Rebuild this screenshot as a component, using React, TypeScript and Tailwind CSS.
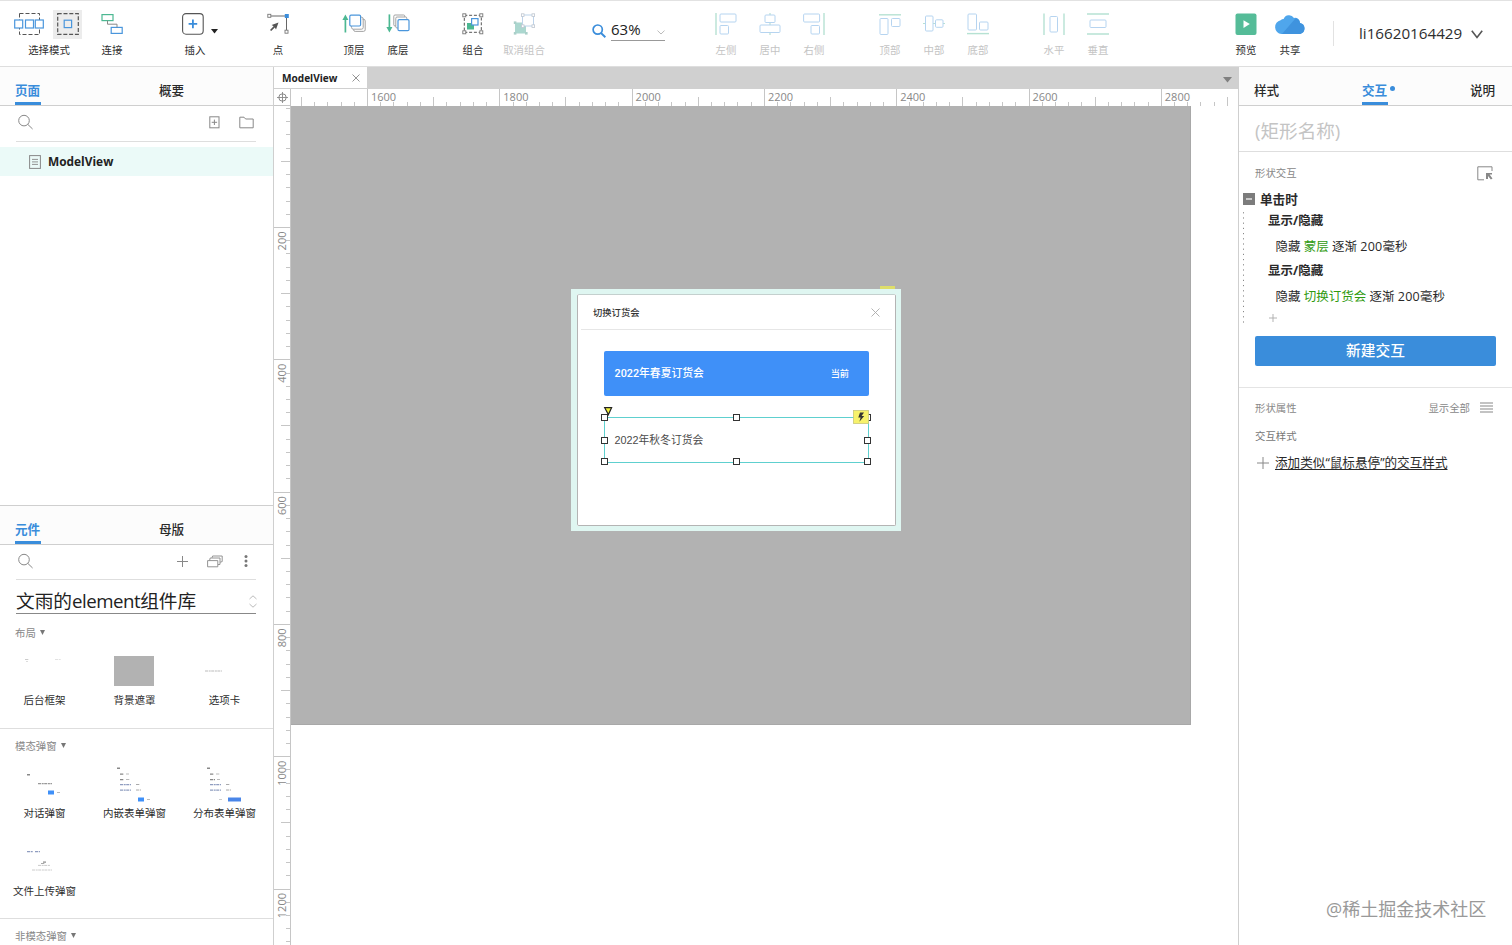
import React from "react";
import type { ReactNode } from "react";

const BLUE = "#4a96dc";
const GREEN = "#4cb892";

/* ---------- toolbar ---------- */

function Tool({ label, muted, width = "w-[44px]", children }: { label: string; muted?: boolean; width?: string; children: ReactNode }) {
  return (
    <div className={`flex shrink-0 flex-col items-center pt-[7px] ${width}`}>
      <div className={`flex h-[32px] items-center justify-center ${muted ? "opacity-40" : ""}`}>{children}</div>
      <div className={`mt-[3px] whitespace-nowrap text-[10.4px] leading-[15px] ${muted ? "text-[#c4c4c4]" : "text-[#2e2e2e]"}`}>{label}</div>
    </div>
  );
}

function Icon({ w = 22, h = 22, children }: { w?: number; h?: number; children: ReactNode }) {
  return (
    <svg width={w} height={h} viewBox={`0 0 ${w} ${h}`} fill="none" className="shrink-0">
      {children}
    </svg>
  );
}

function Toolbar() {
  return (
    <header className="flex h-[67px] shrink-0 border-t border-b border-t-[#e2e2e2] border-b-[#dedede] bg-white pl-[8px]">
      <Tool label="选择模式" width="w-[82px]">
        <div className="flex items-center gap-[9px] pr-[2px]">
          <Icon w={30} h={24}>
            <rect x="5.5" y="1.5" width="20" height="21" stroke="#555" strokeDasharray="4 2" />
            <rect x="0.7" y="8" width="8" height="8" fill="#fff" stroke={BLUE} strokeWidth="1.2" />
            <rect x="11.5" y="8" width="8" height="8" fill="#fff" stroke={BLUE} strokeWidth="1.2" />
            <rect x="21.3" y="8" width="8" height="8" fill="#fff" stroke={BLUE} strokeWidth="1.2" />
          </Icon>
          <div className="flex h-[29px] w-[29px] items-center justify-center bg-[#ececec]">
            <Icon w={22} h={22}>
              <rect x="0.7" y="0.7" width="20.6" height="20.6" stroke="#555" strokeWidth="1.2" strokeDasharray="4 1.8" />
              <rect x="7.2" y="7.2" width="7.4" height="7.4" stroke={BLUE} strokeWidth="1.2" />
            </Icon>
          </div>
        </div>
      </Tool>
      <Tool label="连接">
        <Icon>
          <rect x="1" y="1.6" width="11" height="6" stroke={GREEN} strokeWidth="1.2" />
          <rect x="10.2" y="14.4" width="11" height="6" stroke={BLUE} strokeWidth="1.2" />
          <path d="M6.5 7.6V11.2H16V14.4" stroke="#888" />
        </Icon>
      </Tool>
      <div className="w-[39px] shrink-0" />
      <Tool label="插入">
        <div className="flex items-center gap-[7px] pl-[10px]">
          <Icon>
            <rect x="0.6" y="0.6" width="20.6" height="20.6" rx="3.4" stroke="#555" strokeWidth="1.1" />
            <path d="M10.9 6.6V15.2M6.6 10.9H15.2" stroke="#3a8ddb" strokeWidth="1.8" />
          </Icon>
          <svg width="7" height="5" viewBox="0 0 7 5" className="mt-[14px]"><path d="M0 0H7L3.5 4.6Z" fill="#222" /></svg>
        </div>
      </Tool>
      <div className="w-[39px] shrink-0" />
      <Tool label="点">
        <Icon>
          <path d="M4 3H19.5V17" stroke="#666" />
          <rect x="0.8" y="1.3" width="3" height="3" fill="#fff" stroke="#777" strokeWidth="0.9" />
          <rect x="17.8" y="1" width="4" height="4" fill="#3a8ddb" />
          <rect x="18" y="17.2" width="3" height="3" fill="#fff" stroke="#777" strokeWidth="0.9" />
          <path d="M11.5 9.5L4.6 12.1L6.6 13.3L3 16.9L4.2 18.1L7.8 14.6L9 16.4Z" fill="#555" />
        </Icon>
      </Tool>
      <div className="w-[32px] shrink-0" />
      <Tool label="顶层">
        <Icon w={24} h={22}>
          <path d="M3.4 19.5V5" stroke={GREEN} strokeWidth="1.7" />
          <path d="M0.4 7L3.4 1.4L6.4 7Z" fill={GREEN} />
          <path d="M20.6 6.2H21.4Q23.2 6.2 23.2 8V16.8Q23.2 18.4 21.4 18.4H13.2Q11.6 18.4 11.6 16.8V16.4" stroke="#999" strokeWidth="0.9" />
          <path d="M18.6 4.2H19.4Q21.2 4.2 21.2 6V14.6Q21.2 16.2 19.4 16.2H11.2Q9.6 16.2 9.6 14.6V13" stroke="#999" strokeWidth="0.9" />
          <rect x="7.8" y="2.2" width="10.8" height="10.8" rx="1.2" fill="#fff" stroke={BLUE} strokeWidth="1.2" />
        </Icon>
      </Tool>
      <Tool label="底层">
        <Icon w={24} h={22}>
          <path d="M3.4 1.4V15.5" stroke={GREEN} strokeWidth="1.7" />
          <path d="M0.4 14L3.4 19.4L6.4 14Z" fill={GREEN} />
          <rect x="7.8" y="2" width="11" height="11" rx="1.2" fill="#fff" stroke="#999" strokeWidth="0.9" />
          <rect x="9.8" y="4" width="11" height="11" rx="1.2" fill="#fff" stroke="#999" strokeWidth="0.9" />
          <rect x="12" y="6.6" width="11" height="11" rx="1.2" fill="#fff" stroke={BLUE} strokeWidth="1.2" />
        </Icon>
      </Tool>
      <div className="w-[31px] shrink-0" />
      <Tool label="组合">
        <Icon>
          <rect x="2.3" y="2.3" width="17" height="17" stroke="#555" strokeDasharray="3 1.8" />
          <rect x="5" y="10" width="7" height="6.5" fill={GREEN} />
          <rect x="9.6" y="5.6" width="6.4" height="6.4" fill="#fff" stroke={BLUE} strokeWidth="1.2" />
          {[[0.8, 0.8], [17.8, 0.8], [0.8, 17.8], [17.8, 17.8]].map(([x, y]) => (
            <rect key={`${x}-${y}`} x={x} y={y} width="3" height="3" fill="#fff" stroke="#777" strokeWidth="0.9" />
          ))}
        </Icon>
      </Tool>
      <Tool label="取消组合" muted width="w-[58px]">
        <Icon>
          <rect x="2" y="9.5" width="11" height="11" fill="#2f9c8a" />
          <rect x="9.5" y="2" width="11" height="11" fill="#fff" stroke="#5b93cc" />
          {[[0.8, 8.4], [12, 19], [0.8, 19]].map(([x, y]) => (
            <rect key={`a${x}-${y}`} x={x} y={y} width="2.6" height="2.6" fill="#2f8a7b" />
          ))}
          {[[8.4, 0.8], [19, 0.8], [8.4, 11.8], [19, 11.8]].map(([x, y]) => (
            <rect key={`b${x}-${y}`} x={x} y={y} width="2.6" height="2.6" fill="#fff" stroke="#60748c" strokeWidth="0.8" />
          ))}
        </Icon>
      </Tool>
      <div className="w-[39px] shrink-0" />
      <div className="flex h-[40px] w-[73px] shrink-0 items-end gap-[5px]">
        <svg width="14" height="14" viewBox="0 0 14 14" fill="none" className="mb-[3px] shrink-0">
          <circle cx="5.7" cy="5.6" r="4.6" stroke="#3a8ddb" strokeWidth="1.7" />
          <path d="M9 9L13.4 13.2" stroke="#3a8ddb" strokeWidth="2" />
        </svg>
        <div className="flex h-[24px] flex-1 items-center justify-between border-b border-[#999]">
          <span className="mt-px text-[15px] leading-[20px] text-[#222]">63%</span>
          <svg width="8" height="5" viewBox="0 0 8 5" fill="none" className="mt-[7px]"><path d="M0.5 0.6L4 4L7.5 0.6" stroke="#bbb" /></svg>
        </div>
      </div>
      <div className="w-[39px] shrink-0" />
      <Tool label="左侧" muted>
        <Icon><path d="M1 0V22" stroke={GREEN} strokeWidth="1.4" /><rect x="5" y="1" width="16" height="8" rx="1" stroke={BLUE} /><rect x="5" y="12.5" width="8.5" height="8.5" rx="1" stroke={BLUE} /></Icon>
      </Tool>
      <Tool label="居中" muted>
        <Icon><path d="M11 0V2M11 9.5V12M11 20V22" stroke={GREEN} strokeWidth="1.2" /><rect x="6" y="2" width="10" height="7.5" rx="1" stroke={BLUE} /><rect x="1" y="12" width="20" height="7.5" rx="1" stroke={BLUE} /></Icon>
      </Tool>
      <Tool label="右侧" muted>
        <Icon><path d="M21 0V22" stroke={GREEN} strokeWidth="1.4" /><rect x="0.6" y="1" width="16" height="8" rx="1" stroke={BLUE} /><rect x="8" y="12.5" width="8.5" height="8.5" rx="1" stroke={BLUE} /></Icon>
      </Tool>
      <div className="w-[32px] shrink-0" />
      <Tool label="顶部" muted>
        <Icon><path d="M0 1.8H22" stroke={GREEN} strokeWidth="1.4" /><rect x="1" y="5.5" width="8" height="16" rx="1" stroke={BLUE} /><rect x="12.5" y="5.5" width="8.5" height="8" rx="1" stroke={BLUE} /></Icon>
      </Tool>
      <Tool label="中部" muted>
        <Icon><path d="M0 10.5H2.5M10 10.5H12.5M20 10.5H22" stroke={GREEN} strokeWidth="1.2" /><rect x="2.5" y="3" width="7.5" height="15" rx="1" stroke={BLUE} /><rect x="12.5" y="6.8" width="7.5" height="7.5" rx="1" stroke={BLUE} /></Icon>
      </Tool>
      <Tool label="底部" muted>
        <Icon><path d="M0 20.6H22" stroke={GREEN} strokeWidth="1.4" /><rect x="1" y="1" width="8.5" height="16" rx="1" stroke={BLUE} /><rect x="12.5" y="9" width="8.5" height="8" rx="1" stroke={BLUE} /></Icon>
      </Tool>
      <div className="w-[32px] shrink-0" />
      <Tool label="水平" muted>
        <Icon><path d="M1 0.5V22M21 0.5V22" stroke={GREEN} strokeWidth="1.4" /><rect x="7" y="3.5" width="7.5" height="15.5" rx="1" stroke={BLUE} /></Icon>
      </Tool>
      <Tool label="垂直" muted>
        <Icon><path d="M0 1H22M0 21H22" stroke={GREEN} strokeWidth="1.4" /><rect x="3" y="7" width="16" height="7.5" rx="1" stroke={BLUE} /></Icon>
      </Tool>
      <div className="w-[104px] shrink-0" />
      <Tool label="预览">
        <Icon><rect x="0.5" y="0.5" width="21" height="21.5" rx="2" fill="#55bc98" /><path d="M8.5 7.3V15L14.8 11.1Z" fill="#fff" /></Icon>
      </Tool>
      <Tool label="共享">
        <Icon w={32} h={22}>
          <path d="M7.4 21A7 7 0 0 1 6.6 7.2A4.9 4.9 0 0 1 9.6 6A5.9 5.9 0 0 1 20 5A4.9 4.9 0 0 1 26 9.9A5.7 5.7 0 0 1 26.2 21Z" fill="#4fa6ec" />
          <path d="M8 21L21.6 5.2Q25.6 6 26 9.9A5.7 5.7 0 0 1 26.2 21Z" fill="#3f93de" />
        </Icon>
      </Tool>
      <div className="mt-[20px] ml-[21px] h-[25px] w-px shrink-0 bg-[#e2e2e2]" />
      <div className="ml-[25px] flex h-[64px] items-center gap-[8px]">
        <span className="w-[104px] text-[15.2px] leading-[20px] text-[#2e2e2e]">li16620164429</span>
        <svg width="12" height="9" viewBox="0 0 12 9" fill="none" className="mt-[3px]"><path d="M0.8 0.8L6 7.4L11.2 0.8" stroke="#555" strokeWidth="1.6" /></svg>
      </div>
    </header>
  );
}

/* ---------- left side ---------- */

function Tab({ label, active, dot }: { label: string; active?: boolean; dot?: boolean }) {
  return (
    <div className={`flex h-[38px] w-[26px] shrink-0 flex-col justify-end text-[12.6px] ${active ? "font-bold text-[#3a8ddb]" : "font-medium text-[#2a2a2a]"}`}>
      <div className="relative mb-[2px] h-[20px] whitespace-nowrap leading-[21px]">
        {label}
        {dot && <span className="absolute top-[6px] left-[28px] h-[5px] w-[5px] rounded-full bg-[#3a8ddb]" />}
      </div>
      <div className={`h-[3px] ${active ? "bg-[#3a8ddb]" : ""}`} />
    </div>
  );
}

function TabStrip({ first, second }: { first: string; second: string }) {
  return (
    <div className="flex h-[39px] shrink-0 gap-[118px] border-b border-[#cfcfcf] bg-[#fcfcfc] pl-[15px]">
      <Tab label={first} active />
      <Tab label={second} />
    </div>
  );
}

function Magnifier() {
  return (
    <svg width="16" height="16" viewBox="0 0 16 16" fill="none">
      <circle cx="6" cy="6.6" r="5.3" stroke="#888" />
      <path d="M9.8 10.4L14.6 15" stroke="#888" />
    </svg>
  );
}

function Bars({ items }: { items: [number, number, number, number, string][] }) {
  return (
    <svg width="46" height="40" viewBox="0 0 46 40">
      {items.map(([x, y, w, h, c], i) => (
        <line key={i} x1={x} y1={y + h / 2} x2={x + w} y2={y + h / 2} stroke={c} strokeWidth={h} strokeDasharray={h < 2 ? "3 0.7 2 0.5" : undefined} />
      ))}
    </svg>
  );
}

function Part({ label, children }: { label: string; children: ReactNode }) {
  return (
    <div className="flex w-[90px] flex-col items-center">
      <div className="flex h-[40px] items-center justify-center">{children}</div>
      <div className="mt-[1px] whitespace-nowrap text-[10.5px] leading-[16px] text-[#2e2e2e]">{label}</div>
    </div>
  );
}

function GroupTitle({ label }: { label: string }) {
  return (
    <div className="flex h-[16px] items-center gap-[4px] pl-[15px] text-[10.4px] leading-[16px] text-[#888]">
      <span>{label}</span>
      <svg width="5" height="5" viewBox="0 0 5 5" className="mb-[2px]"><path d="M0 0H5L2.5 5Z" fill="#777" /></svg>
    </div>
  );
}

function LeftSide() {
  return (
    <aside className="flex w-[274px] shrink-0 flex-col overflow-hidden border-r border-[#cfcfcf] bg-white">
      <section className="flex h-[438px] shrink-0 flex-col">
        <TabStrip first="页面" second="概要" />
        <div className="mr-[17px] ml-[16px] flex h-[36px] shrink-0 items-center border-b border-[#dedede] pr-[2px] pl-[2px]">
          <div className="mt-[-3px] flex flex-1 items-center">
            <Magnifier />
            <svg width="11" height="13" viewBox="0 0 11 13" fill="none" className="ml-auto"><rect x="0.8" y="0.8" width="9.2" height="11" stroke="#888" /><path d="M5.4 3.6V9M2.7 6.3H8.1" stroke="#888" /></svg>
            <svg width="15" height="13" viewBox="0 0 15 13" fill="none" className="ml-[19px]"><path d="M0.8 11.8V1.2H5L6.6 3H14.2V11.8Z" stroke="#888" strokeLinejoin="round" /></svg>
          </div>
        </div>
        <div className="mt-[5px] flex h-[29px] shrink-0 items-center gap-[7px] bg-[#ebfaf8] pl-[29px]">
          <svg width="12" height="14" viewBox="0 0 12 14" fill="none"><rect x="0.6" y="0.6" width="10.8" height="12.8" stroke="#888" /><path d="M3 4.4H9M3 6.9H9M3 9.4H9" stroke="#888" strokeWidth="0.9" /></svg>
          <span className="mt-[-2px] text-[11.9px] leading-[16px] font-bold text-[#222]">ModelView</span>
        </div>
      </section>
      <section className="flex flex-1 flex-col border-t border-[#cfcfcf]">
        <TabStrip first="元件" second="母版" />
        <div className="mr-[17px] ml-[16px] flex h-[35px] shrink-0 items-center border-b border-[#dedede] px-[2px]">
          <div className="mt-[-2px] flex flex-1 items-center">
            <Magnifier />
            <svg width="11" height="11" viewBox="0 0 11 11" className="ml-auto"><path d="M5.5 0V11M0 5.5H11" stroke="#888" /></svg>
            <svg width="16" height="13" viewBox="0 0 16 13" fill="none" className="ml-[19px]"><path d="M0.6 11.8V5.6H10.8V11.8ZM2.6 5.4L3.2 3H13V9.4L11 9.6M5 2.8L5.6 1H15.2V6.6L13.2 7.2" stroke="#888" strokeWidth="0.9" /></svg>
            <svg width="4" height="12" viewBox="0 0 4 12" className="mr-[6px] ml-[21px]"><circle cx="2" cy="1.6" r="1.5" fill="#777" /><circle cx="2" cy="6" r="1.5" fill="#777" /><circle cx="2" cy="10.4" r="1.5" fill="#777" /></svg>
          </div>
        </div>
        <div className="mr-[17px] ml-[16px] flex h-[34px] shrink-0 items-center justify-between border-b border-[#888]">
          <span className="mt-[8px] text-[18.7px] leading-[24px] whitespace-nowrap text-[#222]">文雨的<span className="tracking-[-0.5px]">element</span>组件库</span>
          <svg width="8" height="13" viewBox="0 0 8 13" fill="none" className="mt-[9px] mr-[-1px]"><path d="M0.5 4L4 0.8L7.5 4M0.5 9L4 12.2L7.5 9" stroke="#bbb" /></svg>
        </div>
        <div className="h-[115px] shrink-0 border-b border-[#dedede] pt-[11px]">
          <GroupTitle label="布局" />
          <div className="mt-[10px] ml-[-0.5px] flex">
            <Part label="后台框架"><Bars items={[[3, 8, 4, 1, "#ccc"], [4, 10, 2, 1, "#ddd"], [33, 8, 6, 1, "#e2e2e2"]]} /></Part>
            <Part label="背景遮罩"><div className="mr-px h-[30px] w-[40px] bg-[#b2b2b2]" /></Part>
            <Part label="选项卡"><Bars items={[[3, 19.5, 17, 1, "#bbb"]]} /></Part>
          </div>
        </div>
        <div className="h-[190px] shrink-0 border-b border-[#dedede] pt-[9px]">
          <GroupTitle label="模态弹窗" />
          <div className="mt-[10px] ml-[-0.5px] flex flex-wrap gap-y-[21px]">
            <Part label="对话弹窗"><Bars items={[[5, 10, 3, 1.5, "#888"], [16, 19, 14, 1.2, "#999"], [26, 26.5, 6, 4, "#3f90f8"], [35, 28, 3, 1, "#bbb"]]} /></Part>
            <Part label="内嵌表单弹窗"><Bars items={[[5, 3.5, 3, 1.5, "#888"], [8, 9.5, 4, 1.2, "#888"], [14, 9.5, 3, 1, "#bbb"], [8, 15, 4, 1.2, "#888"], [14, 15, 4, 1, "#bbb"], [8, 20, 11, 1.2, "#8f9dc0"], [24, 20, 4, 1, "#aaa"], [8, 25.5, 11, 1.2, "#8f9dc0"], [24, 25.5, 5, 1, "#aaa"], [26, 33.5, 6, 4, "#3f90f8"], [35, 35, 3, 1, "#bbb"]]} /></Part>
            <Part label="分布表单弹窗"><Bars items={[[5, 3.5, 3, 1.5, "#888"], [8, 9.5, 4, 1.2, "#888"], [14, 9.5, 4, 1, "#bbb"], [8, 15, 5, 1.2, "#888"], [15, 15, 3, 1, "#bbb"], [8, 20, 11, 1.2, "#8f9dc0"], [24, 20, 4, 1, "#aaa"], [8, 25.5, 11, 1.2, "#8f9dc0"], [24, 25.5, 5, 1, "#aaa"], [26, 33.5, 13, 4, "#4a86e8"], [17, 35, 3, 1, "#ccc"]]} /></Part>
            <Part label="文件上传弹窗"><Bars items={[[5, 9, 6, 1.2, "#8f9dc0"], [13, 9, 5, 1.2, "#8f9dc0"], [21, 19.5, 3, 1.2, "#888"], [19, 21, 4, 1, "#aaa"], [16, 23, 12, 0.8, "#bbb"], [10, 27.5, 20, 1, "#ccc"]]} /></Part>
          </div>
        </div>
        <div className="pt-[9px]"><GroupTitle label="非模态弹窗" /></div>
      </section>
    </aside>
  );
}

/* ---------- editor ---------- */

const UNIT = 0.6615;

function HorizontalRuler() {
  const ticks: ReactNode[] = [];
  for (let v = 1500; v <= 2900; v += 20) {
    const x = 76 + (v - 1600) * UNIT;
    const len = v % 200 === 0 ? 17 : v % 100 === 0 ? 9 : 4;
    if (x > 0) ticks.push(<line key={v} x1={Math.round(x) + 0.5} x2={Math.round(x) + 0.5} y1={17 - len} y2={17} stroke="#c6c6c6" />);
  }
  const labels = [1600, 1800, 2000, 2200, 2400, 2600, 2800];
  return (
    <svg width="947" height="17" className="shrink-0 bg-white">
      {ticks}
      {labels.map((v) => (
        <text key={v} x={80 + (v - 1600) * UNIT} y="12" fontSize="11" fill="#888">{v}</text>
      ))}
    </svg>
  );
}

function VerticalRuler() {
  const ticks: ReactNode[] = [];
  for (let v = 20; v <= 1280; v += 20) {
    const y = 121 + (v - 200) * UNIT;
    const len = v % 200 === 0 ? 16 : v % 100 === 0 ? 9 : 4;
    ticks.push(<line key={v} x1={16 - len} x2="16" y1={Math.round(y) + 0.5} y2={Math.round(y) + 0.5} stroke="#c6c6c6" />);
  }
  const labels = [200, 400, 600, 800, 1000, 1200];
  return (
    <svg width="17" height="839" className="shrink-0 border-r border-[#c6c6c6] bg-white">
      {ticks}
      {labels.map((v) => (
        <text key={v} transform={`translate(12 ${125.5 + (v - 200) * UNIT}) rotate(-90)`} textAnchor="end" fontSize="11" fill="#888">{v}</text>
      ))}
    </svg>
  );
}

const HANDLES = [[0, 0], [132, 0], [263, 0], [0, 23], [263, 23], [0, 44], [132, 44], [263, 44]];

function Dialog() {
  return (
    <div className="absolute top-[183px] left-[280px] h-[242px] w-[330px] border-[5px] border-l-[6px] border-[#dff6f1] bg-white font-['Liberation_Sans','Noto_Sans_CJK_SC',sans-serif]">
      <div className="absolute top-[-8px] right-[1px] h-[3px] w-[15px] bg-[#dede6a]" />
      <div className="h-full w-full rounded-[2px] border border-[#b4b4b4] border-t-[#c4d0ce]">
        <div className="mr-[3px] ml-[3px] flex h-[35px] items-center justify-between border-b border-[#e6e6e6] pr-[12px] pl-[12px]">
          <span className="mt-px text-[9.3px] leading-[14px] font-medium text-[#333]">切换订货会</span>
          <svg width="9" height="9" viewBox="0 0 9 9" className="mt-px"><path d="M0.5 0.5L8.5 8.5M8.5 0.5L0.5 8.5" stroke="#aaa" strokeWidth="0.9" /></svg>
        </div>
        <div className="mt-[21px] ml-[26px] flex h-[45px] w-[265px] items-center justify-between rounded-[2px] bg-[#3f90f8] pr-[20px] pl-[10.5px] font-['Roboto','Noto_Sans_CJK_SC',sans-serif] font-medium text-white">
          <span className="mt-px text-[10.8px]">2022年春夏订货会</span>
          <span className="mt-px text-[9.2px]">当前</span>
        </div>
        <div className="relative mt-[21px] ml-[26px] flex h-[46px] w-[265px] items-center border border-[#5ed0cf] pl-[9.5px]">
          <span className="text-[10.8px] text-[#4a4a4a]">2022年秋冬订货会</span>
          <svg width="281" height="66" viewBox="-8 -12 281 66" fill="none" className="absolute top-[-13px] left-[-9px]">
            <path d="M0 0.5H264" stroke="#5ed0cf" />
            {HANDLES.map(([x, y]) => (
              <rect key={`${x}-${y}`} x={x - 2.5} y={y - 2.5} width="6" height="6" fill="#fff" stroke="#333" />
            ))}
            <path d="M0.7 -9.3H7.6L4.4 -2.4Z" fill="#f2f23a" stroke="#222" strokeWidth="1.2" />
            <rect x="249.5" y="-6.5" width="15" height="13" fill="#f7f26b" stroke="#c9c77a" strokeWidth="0.8" />
            <path d="M256 -4.5L254.3 0.4H256.6L255.4 4.8L260.2 -1H257.6L260 -4.5Z" fill="#333" />
          </svg>
        </div>
      </div>
    </div>
  );
}

function Editor() {
  return (
    <main className="flex w-[964px] shrink-0 flex-col overflow-hidden">
      <div className="flex h-[22px] shrink-0 items-center border-b border-[#d0d0d0] bg-[#d0d0d0] pr-[6px]">
        <div className="flex h-[21px] w-[93px] items-center justify-between bg-white pr-[7px] pl-[8px]">
          <span className="mt-px text-[10.1px] leading-[14px] font-bold text-[#222]">ModelView</span>
          <svg width="8" height="8" viewBox="0 0 8 8" className="mt-px"><path d="M0.5 0.5L7.5 7.5M7.5 0.5L0.5 7.5" stroke="#888" strokeWidth="0.9" /></svg>
        </div>
        <svg width="9" height="6" viewBox="0 0 9 6" className="mt-[5px] ml-auto"><path d="M0 0H9L4.5 5.5Z" fill="#808080" /></svg>
      </div>
      <div className="flex h-[17px] shrink-0 border-b border-[#c6c6c6]">
        <div className="flex w-[17px] shrink-0 items-center justify-center border-r border-[#c6c6c6] bg-white">
          <svg width="11" height="11" viewBox="0 0 11 11" fill="none"><circle cx="5.5" cy="5.5" r="3.7" stroke="#888" /><path d="M5.5 0V11M0 5.5H11" stroke="#888" strokeWidth="0.9" /></svg>
        </div>
        <HorizontalRuler />
      </div>
      <div className="flex flex-1">
        <VerticalRuler />
        <div className="relative flex-1 bg-white">
          <div className="h-[619px] w-[900px] border-r border-b border-[#a8a8a8] bg-[#b2b2b2]" />
          <Dialog />
        </div>
      </div>
    </main>
  );
}

/* ---------- right side ---------- */

function Action({ target }: { target: string }) {
  return (
    <>
      <div className="h-[22px] pl-[10px] text-[12.5px] leading-[22px] font-bold">显示/隐藏</div>
      <div className="h-[27.5px] pl-[17.5px] text-[12.5px] leading-[29px] whitespace-pre">
        隐藏 <span className="text-[#2f9a10]">{target}</span> 逐渐 <span className="tracking-[0.25px]">200</span>毫秒
      </div>
    </>
  );
}

function RightSide() {
  return (
    <aside className="flex w-[274px] shrink-0 flex-col border-l border-[#cfcfcf] bg-white text-[#2a2a2a]">
      <div className="flex h-[39px] shrink-0 justify-between border-b border-[#cfcfcf] bg-[#fcfcfc] pr-[16px] pl-[15px]">
        <Tab label="样式" />
        <Tab label="交互" active dot />
        <Tab label="说明" />
      </div>
      <div className="flex h-[46px] shrink-0 items-center border-b border-[#dedede] pl-[16px] text-[18.6px] leading-[24px] text-[#c4c4c4]">
        <span className="mt-[4px]">(矩形名称)</span>
      </div>
      <div className="h-[236px] shrink-0 border-b border-[#e4e4e4]">
        <div className="flex items-center justify-between pt-[13px] pr-[19px] pl-[16px] text-[10.4px] leading-[16px] text-[#888]">
          <span>形状交互</span>
          <svg width="16" height="15" viewBox="0 0 16 15" fill="none"><path d="M15 5V0.8H0.8V13.8H7" stroke="#888" /><path d="M9 7H15V8.6H12.6L15.5 12.4L13.9 13.6L11 10V13H9Z" fill="#888" /></svg>
        </div>
        <div className="mt-[7px] flex h-[22px] items-center pl-[4px]">
          <svg width="12" height="12" viewBox="0 0 12 12" className="mt-[-1px]"><rect width="12" height="12" fill="#7c7c7c" /><path d="M3 6H9" stroke="#fff" strokeWidth="1.2" /></svg>
          <span className="mt-px ml-[5px] text-[12.6px] leading-[22px] font-bold">单击时</span>
        </div>
        <div className="ml-[4px] flex h-[119px]">
          <svg width="1" height="119" className="mr-[14px]"><line x1="0.5" y1="-3" x2="0.5" y2="115" stroke="#888" strokeDasharray="1.2 4" /></svg>
          <div>
            <Action target="蒙层" />
            <Action target="切换订货会" />
            <svg width="8" height="8" viewBox="0 0 8 8" className="mt-[5px] ml-[11px]"><path d="M4 0V8M0 4H8" stroke="#aaa" strokeWidth="0.9" /></svg>
          </div>
        </div>
        <button className="mt-[7px] ml-[16px] block h-[30px] w-[241px] rounded-[2px] bg-[#3a8ddb] pb-[2px] text-[14.7px] leading-[26px] font-medium text-white">新建交互</button>
      </div>
      <div className="flex items-center pt-[12px] pr-[19px] pl-[16px] text-[10.4px] leading-[16px] text-[#888]">
        <span>形状属性</span>
        <span className="ml-auto">显示全部</span>
        <svg width="13" height="11" viewBox="0 0 13 11" className="mb-[2px] ml-[10px]"><path d="M0 1H13M0 4H13M0 7H13M0 10H13" stroke="#888" strokeWidth="1.2" /></svg>
      </div>
      <div className="mt-[12px] pl-[16px] text-[10.4px] leading-[16px] text-[#777]">交互样式</div>
      <div className="mt-[8px] flex items-center gap-[6px] pl-[18px]">
        <svg width="12" height="12" viewBox="0 0 12 12"><path d="M6 0V12M0 6H12" stroke="#888" /></svg>
        <span className="mt-px text-[12.6px] leading-[20px] whitespace-nowrap underline underline-offset-2">添加类似“鼠标悬停”的交互样式</span>
      </div>
      <div className="mt-auto mb-[22px] pl-[87px] text-[18px] leading-[28px] whitespace-nowrap text-[#999]">@稀土掘金技术社区</div>
    </aside>
  );
}

export default function App() {
  return (
    <div className="flex h-[945px] w-[1512px] flex-col overflow-hidden bg-white font-['Open_Sans','Noto_Sans_CJK_SC',sans-serif]" lang="zh-CN">
      <Toolbar />
      <div className="flex h-[878px]">
        <LeftSide />
        <Editor />
        <RightSide />
      </div>
    </div>
  );
}
